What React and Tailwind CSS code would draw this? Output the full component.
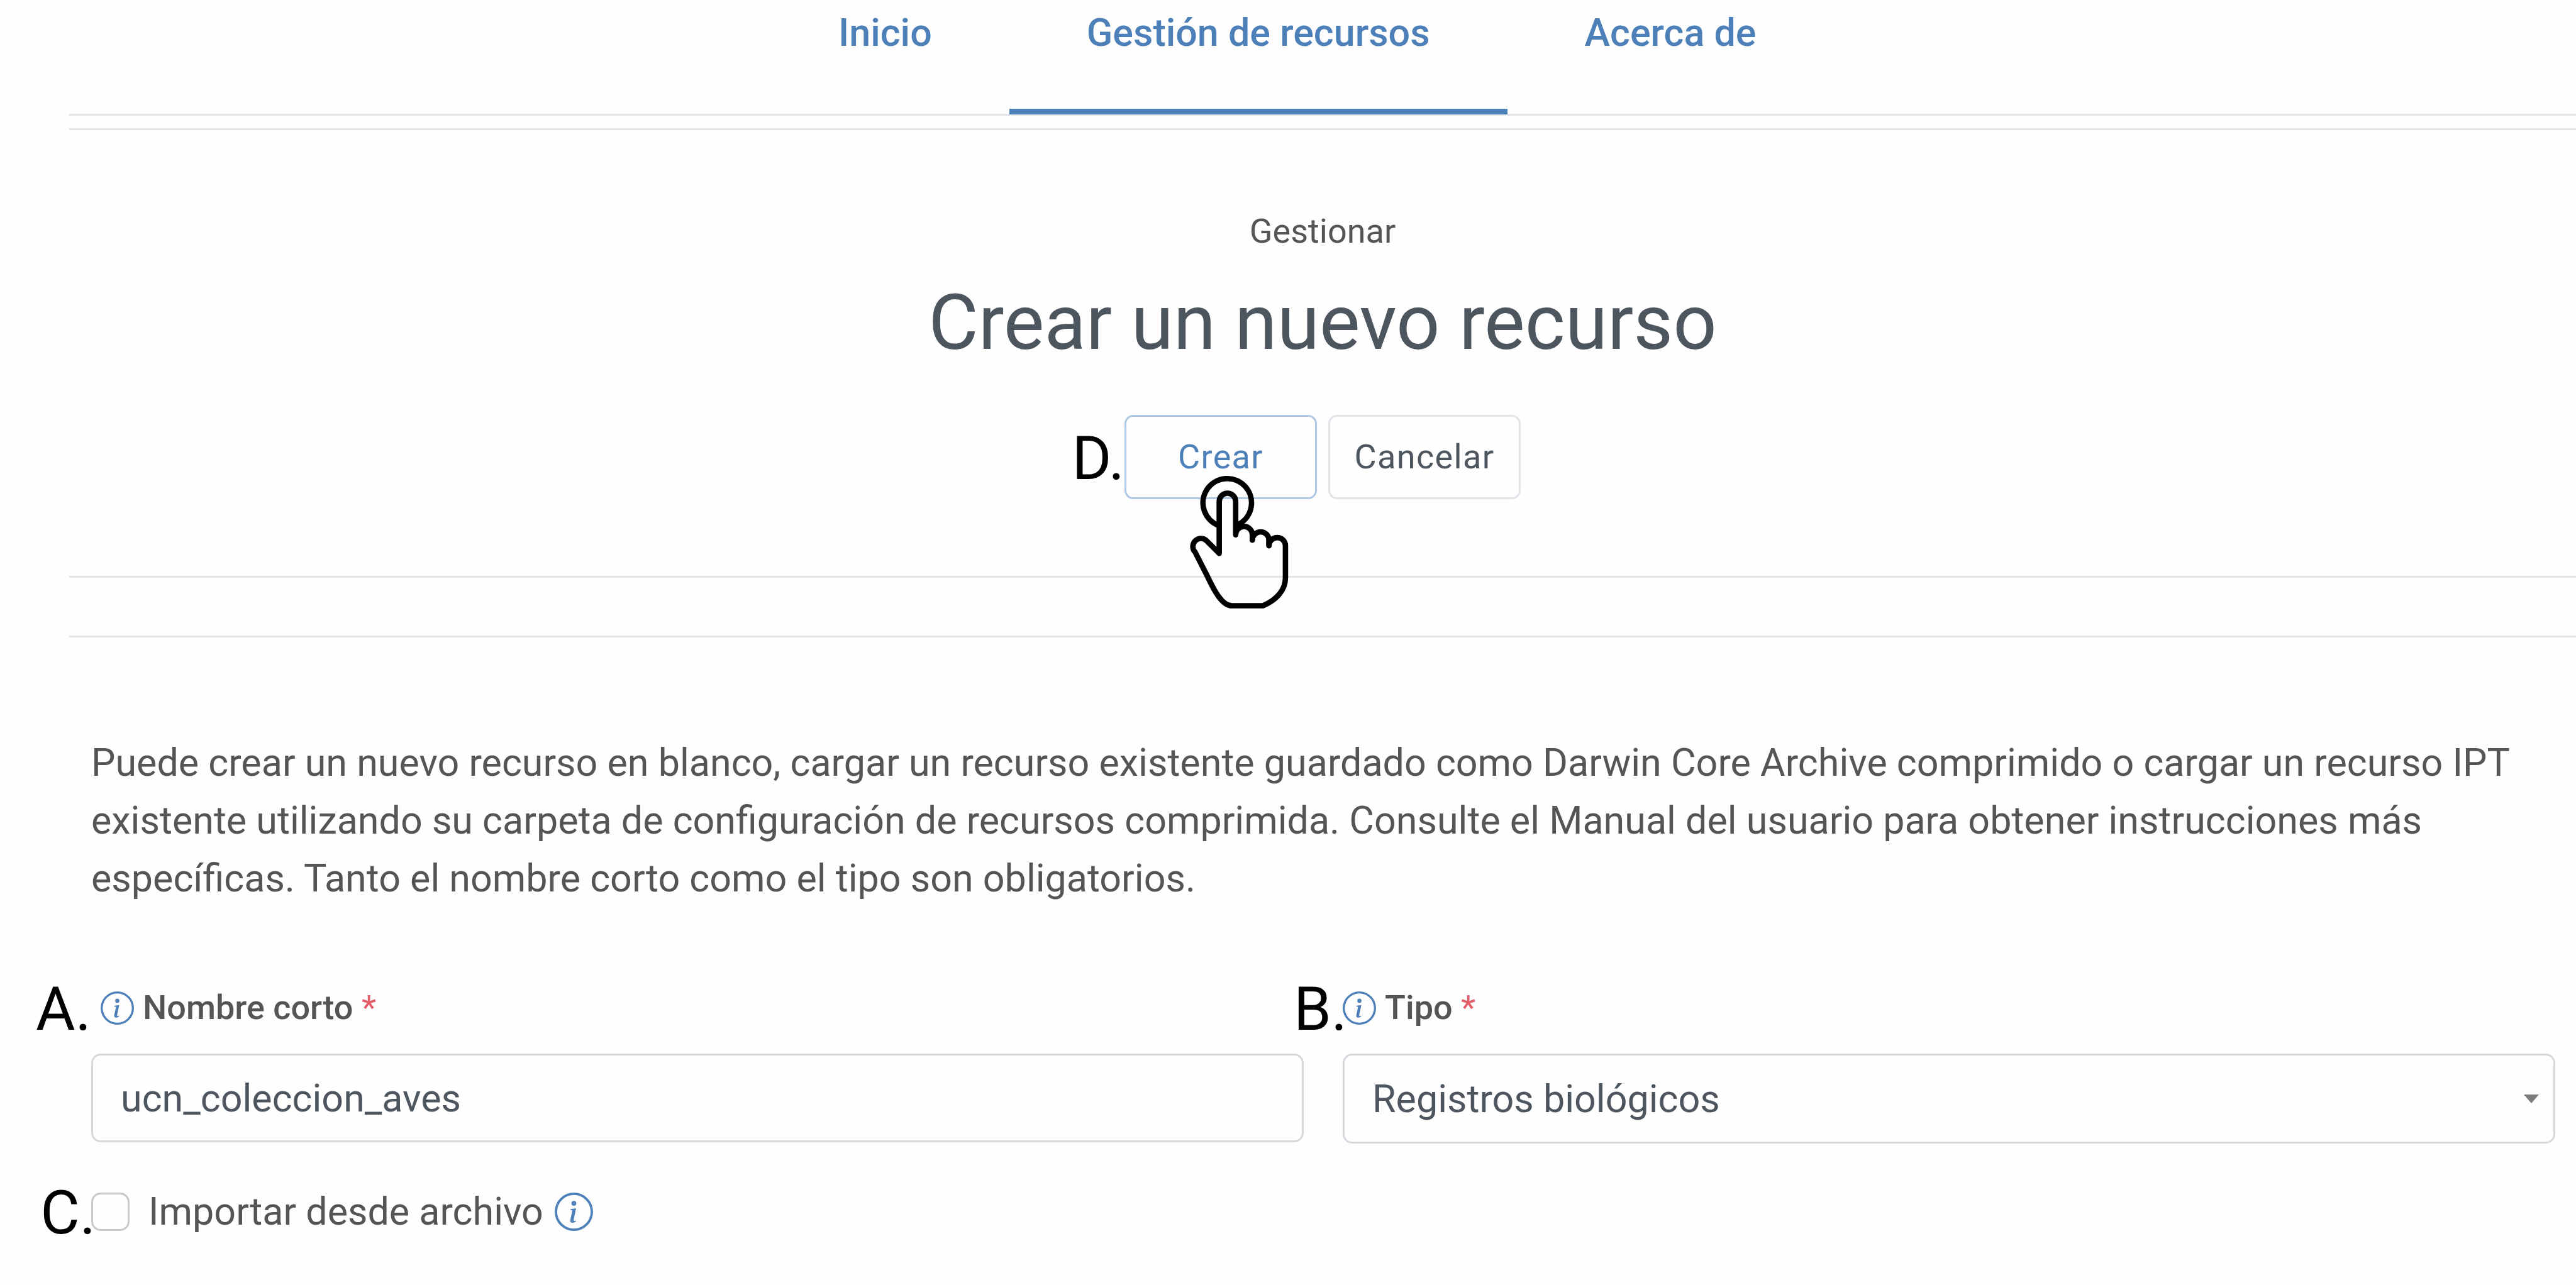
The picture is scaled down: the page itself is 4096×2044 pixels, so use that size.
const NAV = [
  { text: 'Inicio', active: false },
  { text: 'Gestión de recursos', active: true },
  { text: 'Acerca de', active: false },
];

function InfoIcon({ className }) {
  return (
    <svg viewBox="0 0 16 16" fill="#4d80b9" className={className} aria-hidden="true">
      <path d="M8 15A7 7 0 1 1 8 1a7 7 0 0 1 0 14m0 1A8 8 0 1 0 8 0a8 8 0 0 0 0 16" />
      <path d="m8.93 6.588-2.29.287-.082.38.45.083c.294.07.352.176.288.469l-.738 3.468c-.194.897.105 1.319.808 1.319.545 0 1.178-.252 1.465-.598l.088-.416c-.2.176-.492.246-.686.246-.275 0-.375-.193-.304-.533zM9 4.500a1 1 0 1 1-2 0 1 1 0 0 1 2 0" />
    </svg>
  );
}

/* Step letter hanging to the left of the control it points out */
function Marker({ children, className = '' }) {
  return (
    <span
      aria-hidden="true"
      className={`absolute inset-y-0 right-full flex items-center pt-1 text-[96px] leading-none text-black ${className}`}
    >
      {children}
    </span>
  );
}

function TapHand({ className }) {
  return (
    <svg
      viewBox="0 0 630 750"
      fill="none"
      stroke="#000"
      strokeWidth="27"
      strokeLinejoin="round"
      strokeLinecap="round"
      className={className}
      aria-hidden="true"
    >
      <path d="M212 286A121 121 0 1 1 310 278" />
      <path d="M294 328V165a41 41 0 0 0-82 0V424L150 362A39 39 0 0 0 92 418L154 540C185 605 225 685 275 685H430C500 655 542 605 542 545V386a41 41 0 0 0-82 0V358a41 41 0 0 0-83 0V331a41 41 0 0 0-83 0" />
      <path d="M377 331V355M460 358V384" />
    </svg>
  );
}

function FieldLabel({ htmlFor, children }) {
  return (
    <label htmlFor={htmlFor} className="text-[54px] leading-[60px] font-medium">
      {children} <span className="font-normal text-[#e35d6a]">*</span>
    </label>
  );
}

export default function App() {
  return (
    <div className="min-h-screen overflow-hidden bg-[#fefefe] pl-[110px] font-['Roboto',sans-serif] text-[61px] leading-[92px] text-[#555555]">
      <nav className="flex h-[184px] border-b-[3px] border-[#e1e4e8] pl-[1100px]">
        {NAV.map((n) => (
          <a
            key={n.text}
            href="#"
            className={`h-[182px] px-[123px] pt-[6px] font-medium text-[#4d80b9] ${n.active ? 'border-b-[9px] border-[#4d80b9]' : ''}`}
          >
            {n.text}
          </a>
        ))}
      </nav>

      <header className="mt-5 flex flex-col items-center border-y-[3px] border-[#e1e4e8] pt-[121px] pb-[122px]">
        <p className="text-[54px] leading-[80px]">Gestionar</p>
        <h1 className="mt-[32px] text-[122px] leading-[148px] text-[#4d565f]">Crear un nuevo recurso</h1>
        <div className="relative mt-[72px] flex gap-[18px]">
          <Marker>D.</Marker>
          <button className="h-[134px] w-[306px] rounded-[14px] border-[3px] border-[#b0c8e3] text-[54px] tracking-wide text-[#4d80b9]">
            Crear
          </button>
          <button className="h-[134px] w-[306px] rounded-[14px] border-[3px] border-[#e1e4e8] text-[54px] tracking-wide text-[#4d565f]">
            Cancelar
          </button>
          <TapHand className="pointer-events-none absolute top-[85px] left-[83px] w-[201px]" />
        </div>
      </header>

      <main className="mt-[92px] border-t-[3px] border-[#e6e6e6] pt-[153px] pr-[33px] pl-[35px]">
        <p>
          Puede crear un nuevo recurso en blanco, cargar un recurso existente guardado como Darwin Core
          Archive comprimido o cargar un recurso IPT existente utilizando su carpeta de configuración de
          recursos comprimida. Consulte el Manual del usuario para obtener instrucciones más específicas.
          Tanto el nombre corto como el tipo son obligatorios.
        </p>

        <form className="mt-[130px]">
          <div className="grid grid-cols-2 items-start gap-x-[62px]">
            <div>
              <div className="relative flex items-center gap-[14px] pl-[15px]">
                <Marker>A.</Marker>
                <InfoIcon className="h-[53px] w-[53px]" />
                <FieldLabel htmlFor="shortname">Nombre corto</FieldLabel>
              </div>
              <input
                id="shortname"
                type="text"
                defaultValue="ucn_coleccion_aves"
                className="mt-[43px] block h-[141px] w-full rounded-[15px] border-[3px] border-[#d5d8dc] bg-transparent px-[44px] text-[#4d565f]"
              />
            </div>
            <div>
              <div className="relative flex items-center gap-[14px]">
                <Marker className="-mr-[7px]">B.</Marker>
                <InfoIcon className="h-[53px] w-[53px]" />
                <FieldLabel htmlFor="type">Tipo</FieldLabel>
              </div>
              <div className="relative mt-[43px]">
                <select
                  id="type"
                  className="block h-[143px] w-full appearance-none rounded-[15px] border-[3px] border-[#d5d8dc] bg-transparent px-[44px] text-[#4d565f]"
                >
                  <option>Registros biológicos</option>
                </select>
                <svg
                  viewBox="0 0 24 14"
                  fill="#7b7b7b"
                  className="pointer-events-none absolute top-[65px] right-[26px] w-[24px]"
                  aria-hidden="true"
                >
                  <path d="M0 0h24L12 14z" />
                </svg>
              </div>
            </div>
          </div>

          <div className="relative mt-[62px] flex items-center">
            <Marker className="-mr-[7px]">C.</Marker>
            <input
              id="import"
              type="checkbox"
              className="h-[61px] w-[61px] appearance-none rounded-[15px] border-[3px] border-[#c8c8c8] bg-transparent"
            />
            <label htmlFor="import" className="ml-[30px]">
              Importar desde archivo
            </label>
            <InfoIcon className="ml-[18px] h-[61px] w-[61px]" />
          </div>
        </form>
      </main>
    </div>
  );
}
